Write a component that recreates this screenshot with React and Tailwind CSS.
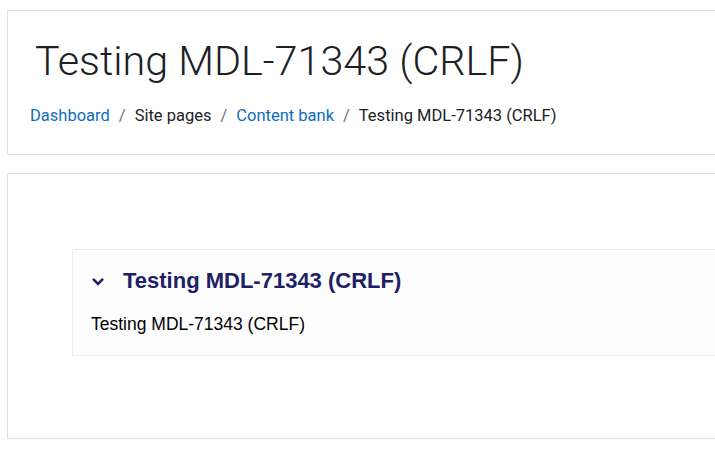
export default function App() {
  const crumbs = [
    { label: 'Dashboard', link: true },
    { label: 'Site pages', link: false },
    { label: 'Content bank', link: true },
    { label: 'Testing MDL-71343 (CRLF)', link: false },
  ];

  return (
    <div className="w-[715px] h-[449px] overflow-hidden bg-white pl-[7px] pt-[10px] font-['Roboto',sans-serif] text-[#1d2125]">
      {/* Page header */}
      <div className="w-[740px] h-[145px] border border-[#dee2e6] pl-[22px] pt-[26px]">
        <h1 className="ml-[5px] text-[41.3px] leading-[48px] font-light">
          Testing MDL-71343 (CRLF)
        </h1>
        <nav className="mt-[19px] flex items-center text-[16.5px] leading-[24px]">
          {crumbs.map((c, i) => (
            <span key={c.label} className="flex items-center">
              {i > 0 && <span className="px-[9px] text-[#6a737b]">/</span>}
              <span className={c.link ? 'text-[#0f6cbf]' : 'text-[#1d2125]'}>{c.label}</span>
            </span>
          ))}
        </nav>
      </div>

      {/* Main region */}
      <div className="mt-[18px] w-[740px] h-[266px] border border-[#dee2e6] pl-[64px] pt-[75px]">
        <div className="h-[107px] border border-[#ececec] bg-[#fdfdfd] pl-[18px] pt-[18px] font-['Liberation_Sans',Arial,sans-serif]">
          <div className="flex items-center">
            <svg width="14" height="14" viewBox="0 0 14 14" className="text-[#1d2066]">
              <path d="M2 4.8 L7 9.8 L12 4.8" fill="none" stroke="currentColor" strokeWidth="2.6" />
            </svg>
            <h2 className="ml-[18px] text-[22px] leading-[26px] font-bold text-[#1d2066]">
              Testing MDL-71343 (CRLF)
            </h2>
          </div>
          <p className="mt-[19px] text-[17.5px] leading-[22px] text-black">Testing MDL-71343 (CRLF)</p>
        </div>
      </div>
    </div>
  );
}
